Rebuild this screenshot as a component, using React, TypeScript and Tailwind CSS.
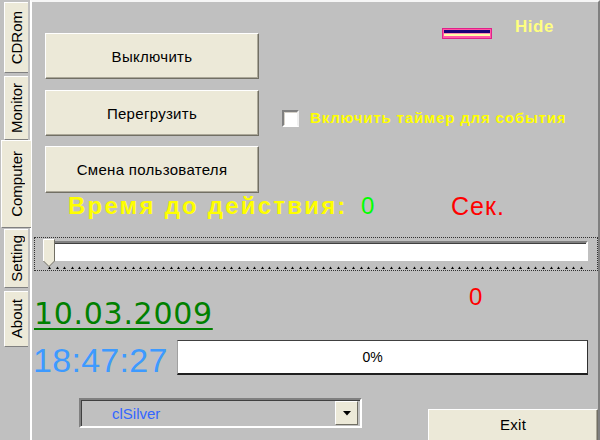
import React from 'react'

const SideTab: React.FC<{ label: string; active?: boolean; className?: string }> = ({ label, active, className = '' }) => (
  <div
    className={`flex items-center justify-center bg-[#ece9d8] border-t border-l border-b border-t-white border-l-white border-b-[#808080] ${
      active ? 'relative z-10 w-[30px] ml-[1px]' : 'w-[24px] ml-[4px]'
    } ${className}`}
  >
    <span className="[writing-mode:vertical-rl] rotate-180 text-[15px] leading-none text-black">{label}</span>
  </div>
)

const XpButton: React.FC<{ label: string; className?: string }> = ({ label, className = '' }) => (
  <div
    className={`flex items-center justify-center bg-[#ece9d8] border border-t-white border-l-white border-b-[#716f64] border-r-[#716f64] shadow-[inset_-1px_-1px_0_#aca899] text-[15px] leading-none tracking-[0.3px] text-black ${className}`}
  >
    {label}
  </div>
)

const Thumb = () => (
  <svg width="12" height="28" viewBox="0 0 12 28" className="absolute left-[8px] top-[1px]">
    <path d="M0.5 22 V0.5 H11.5 V22 L6 27.5 Z" fill="#ece9d8" />
    <path d="M0.5 22 V0.5 H11" fill="none" stroke="#ffffff" />
    <path d="M11.5 0.5 V22 L6 27.5 L0.5 22" fill="none" stroke="#716f64" />
  </svg>
)

const Ticks = () => {
  const ticks = Array.from({ length: 71 }, (_, i) => 5 + i * 7.6)
  return (
    <svg width="545" height="4" className="absolute left-[8px] bottom-0">
      {ticks.map((x, i) => (
        <path key={i} d={`M${Math.round(x)} 3 h3 l-1.5 -2.5 Z`} fill="#000" />
      ))}
    </svg>
  )
}

export default function App() {
  return (
    <div className="w-[600px] h-[440px] overflow-hidden bg-[#c0c0c0] flex font-['Liberation_Sans',Arial,sans-serif]">
      {/* tabs */}
      <div className="w-[30px] shrink-0 flex flex-col">
        <SideTab label="CDRom" className="mt-[2px] h-[71px]" />
        <SideTab label="Monitor" className="mt-[3px] h-[64px]" />
        <SideTab label="Computer" active className="h-[88px]" />
        <SideTab label="Setting" className="mt-[1px] h-[59px]" />
        <SideTab label="About" className="mt-[3px] h-[56px]" />
      </div>

      {/* page */}
      <div className="flex-1 h-full flex flex-col border-l-2 border-t-2 border-r-2 border-l-white border-t-[#f6f6f6] border-r-[#808080]">
        <div className="flex h-[192px] shrink-0">
          <div className="ml-[13px] pt-[31px] flex flex-col">
            <XpButton label="Выключить" className="w-[214px] h-[46px]" />
            <XpButton label="Перегрузить" className="w-[214px] h-[46px] mt-[11px]" />
            <XpButton label="Смена пользователя" className="w-[214px] h-[47px] mt-[10px]" />
          </div>
          <div className="flex flex-col">
            <div className="flex items-start pt-[16px]">
              <div className="ml-[183px] mt-[10px] w-[50px] h-[11px] bg-[#ff5aa5] border border-[#e0208a] p-[1px] flex flex-col">
                <div className="h-[3px] bg-[#1a0078]" />
                <div className="h-[1px] bg-[#ff8fb0]" />
                <div className="h-[2px] bg-[#ffffa8]" />
              </div>
              <span className="ml-[23px] text-[17px] leading-none font-bold tracking-[0.5px] text-[#ffff80]">Hide</span>
            </div>
            <div className="flex items-start mt-[71px] ml-[23px]">
              <div className="w-[17px] h-[17px] border-2 border-t-[#808080] border-l-[#808080] border-b-white border-r-[#f0f0f0] bg-white shadow-[inset_1px_1px_0_#d4d0c8]" />
              <span className="ml-[11px] text-[15px] leading-none font-bold tracking-[0.85px] text-[#ffff00]">
                Включить таймер для события
              </span>
            </div>
          </div>
        </div>

        <div className="flex items-start h-[43px] shrink-0 text-[24px] leading-none">
          <span className="ml-[36px] w-[293px] font-bold tracking-[2.2px] text-[#ffff00] whitespace-nowrap">Время до действия:</span>
          <span className="w-[90px] text-[#00ff00]">0</span>
          <span className="text-[25px] tracking-[1px] text-[#ff0000]">Сек.</span>
        </div>

        {/* track bar */}
        <div className="relative ml-[2px] h-[34px] shrink-0 border border-dotted border-[#303030]">
          <div className="ml-[8px] mt-[3px] w-[545px] h-[20px] bg-white border-2 border-t-[#808080] border-l-[#808080] border-b-white border-r-white shadow-[inset_1px_1px_0_#404040]" />
          <Thumb />
          <Ticks />
        </div>

        <div className="flex items-start pt-[14px] shrink-0">
          <div className="ml-[2px] w-[435px] mt-[14px]">
            <span className="font-['DejaVu_Sans',sans-serif] text-[30px] leading-none tracking-[0.7px] text-[#008000] underline decoration-2 underline-offset-[4px]">
              10.03.2009
            </span>
          </div>
          <span className="text-[24px] leading-none text-[#ff0000]">0</span>
        </div>

        <div className="flex items-start mt-[9px] shrink-0">
          <div className="ml-[1px] w-[144px] mt-[3px] text-[34px] leading-none tracking-[0.3px] text-[#3d9aff]">18:47:27</div>
          <div className="w-[411px] h-[35px] bg-white border-l border-t border-r border-b-2 border-l-[#a0a0a0] border-t-[#404040] border-r-[#303030] border-b-[#202020] flex items-center justify-center pr-[20px] text-[14px] leading-none text-black">
            0%
          </div>
        </div>

        <div className="flex items-start mt-[21px] shrink-0">
          <div className="ml-[47px] w-[283px] h-[30px] border-2 border-t-[#808080] border-l-[#808080] border-b-white border-r-white shadow-[inset_1px_1px_0_#404040] flex items-center pr-[2px]">
            <span className="pl-[31px] flex-1 text-[15px] leading-none text-[#3366ff]">clSilver</span>
            <div className="w-[23px] h-[24px] bg-[#ece9d8] border border-t-white border-l-white border-b-[#716f64] border-r-[#716f64] flex items-center justify-center">
              <svg width="8" height="5" viewBox="0 0 8 5">
                <path d="M0 0 H8 L4 4.5 Z" fill="#000" />
              </svg>
            </div>
          </div>
          <XpButton label="Exit" className="ml-[66px] mt-[11px] w-[170px] h-[40px] !items-start pt-[7px]" />
        </div>
      </div>
    </div>
  )
}
